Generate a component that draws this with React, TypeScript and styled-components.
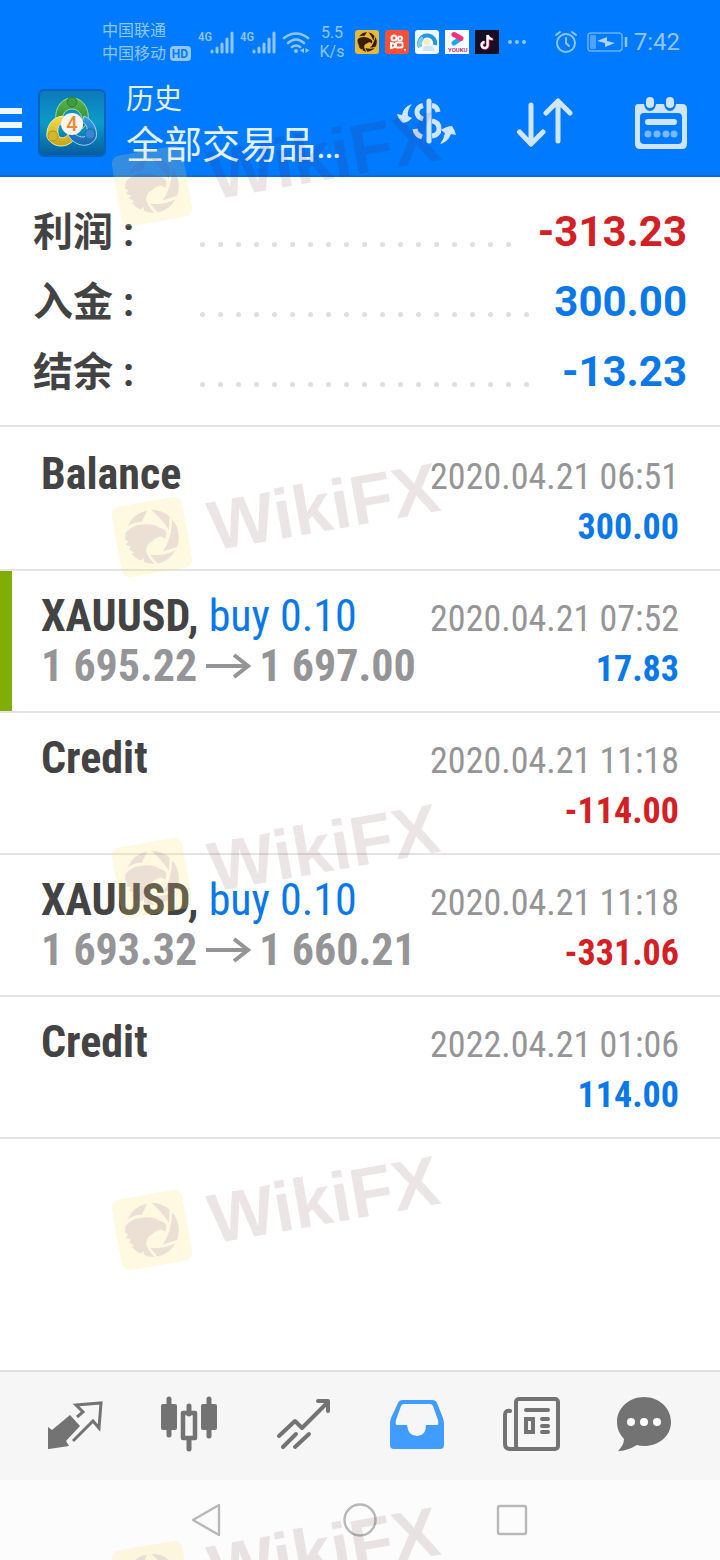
import React from 'react';
import styled, { createGlobalStyle, css } from 'styled-components';

const Global = createGlobalStyle`
  *, *::before, *::after { box-sizing: border-box; }
  body { margin: 0; background: #fff; }
  button { appearance: none; border: 0; padding: 0; background: none; color: inherit; font: inherit; cursor: pointer; }
`;

const BLUE = '#0a78e8';
const RED = '#d32024';

const Page = styled.div`
  position: relative;
  overflow: hidden;
  display: flex;
  flex-direction: column;
  min-height: 100vh;
  background: #fff;
  color: #434343;
  font-family: Roboto, 'Noto Sans CJK SC', sans-serif;
  svg { display: block; flex: none; }
`;

const StatusBar = styled.div`
  display: flex;
  align-items: center;
  height: 84px;
  padding: 0 40px 0 102px;
  background: #007aff;
  color: #8fc6ff;
`;
const Carrier = styled.div`
  display: grid;
  font-size: 16px;
  line-height: 23px;
  width: 96px;
  white-space: nowrap;
`;
const CarrierLine = styled.span`
  display: flex;
  align-items: center;
  gap: 4px;
`;
const Speed = styled.div`
  width: 34px;
  margin: 0 6px 0 3px;
  font-size: 16px;
  line-height: 19px;
  text-align: center;
`;
const AppBadges = styled.div`
  display: flex;
  gap: 6px;
  flex: 1;
  align-items: center;
`;
const PowerGroup = styled.div`
  display: flex;
  align-items: center;
  gap: 9px;
`;
const Clock = styled.time`
  margin-left: 6px;
  font-size: 24px;
  line-height: 28px;
`;

const Header = styled.header`
  display: flex;
  align-items: center;
  height: 93px;
  padding-right: 31px;
  padding-bottom: 14px;
  border-bottom: 2px solid #0e6dd0;
  background: #007aff;
  color: #e3f1ff;
`;
const MenuButton = styled.button`
  display: grid;
  gap: 8px;
  width: 22px;
  margin: 4px 16px 0 0;
`;
const MenuBar = styled.span`
  height: 6px;
  background: #eef6ff;
`;
const Titles = styled.div`
  flex: 1;
  min-width: 0;
  margin-left: 20px;
  padding-top: 5px;
`;
const Title = styled.h1`
  margin: 0;
  font-size: 28px;
  line-height: 40px;
  font-weight: 400;
`;
const Subtitle = styled.div`
  font-size: 38px;
  line-height: 50px;
  font-weight: 400;
`;
const Actions = styled.div`
  display: flex;
  gap: 60px;
`;

const Summary = styled.dl`
  margin: 0;
  padding: 20px 33px 18px;
  border-bottom: 2px solid #e4e4e4;
`;
const SummaryRow = styled.div`
  display: flex;
  align-items: center;
  height: 70px;
`;
const SummaryLabel = styled.dt`
  width: 160px;
  padding-top: 2px;
  font-size: 40px;
  line-height: 48px;
  font-weight: 700;
`;
const Leader = styled.span`
  display: flex;
  flex-wrap: wrap;
  flex: 1;
  height: 5px;
  margin: 24px 16px 0 0;
  overflow: hidden;
`;
const Dot = styled.i`
  width: 5px;
  height: 5px;
  margin: 0 6px 0 7px;
  border-radius: 50%;
  background: #dedede;
`;
const SummaryValue = styled.dd<{ $negative?: boolean }>`
  margin: 0;
  font-size: 42px;
  line-height: 48px;
  font-weight: 700;
  color: ${p => (p.$negative ? RED : BLUE)};
`;

const Deals = styled.ul`
  flex: 1;
  margin: 0;
  padding: 2px 0 0;
  list-style: none;
  font-family: 'Roboto Condensed', 'Liberation Sans Narrow', Roboto, sans-serif;
`;
const Deal = styled.li<{ $marked?: boolean }>`
  display: flex;
  justify-content: space-between;
  height: 142px;
  padding: 20px 41px 0;
  border-bottom: 2px solid #e4e4e4;
  ${p => p.$marked && css`box-shadow: inset 12px 0 #80ad08;`}
`;
const DealMain = styled.div`
  font-size: 44px;
  line-height: 50px;
  font-weight: 700;
  white-space: nowrap;
`;
const Side = styled.span`
  font-weight: 400;
  color: ${BLUE};
`;
const Prices = styled.div`
  display: flex;
  align-items: center;
  gap: 8px;
  color: #959597;
`;
const DealMeta = styled.div`
  padding-top: 3px;
  font-size: 36px;
  line-height: 50px;
  text-align: right;
  white-space: nowrap;
`;
const DealTime = styled.time`
  display: block;
  color: #959597;
`;
const Amount = styled.div<{ $negative?: boolean }>`
  font-weight: 700;
  color: ${p => (p.$negative ? RED : BLUE)};
`;

const TabBar = styled.nav`
  display: flex;
  height: 110px;
  padding: 0 18px 4px;
  border-top: 2px solid #e0e0e0;
  background: #f6f6f6;
`;
const Tab = styled.button<{ $active?: boolean }>`
  display: grid;
  place-items: center;
  flex: 1;
  color: ${p => (p.$active ? '#409cff' : '#737373')};
`;
const SystemNav = styled.nav`
  display: flex;
  justify-content: center;
  align-items: center;
  gap: 116px;
  height: 80px;
  background: #fcfcfc;
`;

const Watermarks = styled.div`
  position: absolute;
  inset: 0;
  overflow: hidden;
  pointer-events: none;
`;
const Watermark = styled.div<{ $top: number }>`
  position: absolute;
  left: 114px;
  top: ${p => p.$top}px;
  display: flex;
  align-items: center;
  gap: 22px;
  transform: rotate(-10deg);
  font: 700 70px/80px 'Liberation Sans', sans-serif;
  color: rgba(80, 20, 20, 0.11);
`;

const Signal = () => (
  <svg width="42" height="26" viewBox="0 0 42 26">
    <text x="0" y="12" fontFamily="Roboto Condensed" fontSize="13" fontWeight="500" fill="#8fc6ff">4G</text>
    <g stroke="#8fc6ff" strokeWidth="3" strokeLinecap="round">
      <path d="M14 22v1M19 19v4M24 15v8M29 10v13M34 4v19" />
    </g>
  </svg>
);

const Wifi = () => (
  <svg width="30" height="26" viewBox="0 0 30 26" fill="none" stroke="#8fc6ff" strokeWidth="2.6" strokeLinecap="round">
    <path d="M2 9q12-9 24 0M6 14q8-7 16 0M10 18q4-3 8 0" />
    <circle cx="14" cy="22" r="2" fill="#8fc6ff" stroke="none" />
    <path d="M22 19v5l-4-2.500zM23.500 19v5l4-2.500z" fill="#8fc6ff" stroke="none" />
  </svg>
);

const EAGLE = 'M-27-2L-25-9Q-18-15-7-14Q4-13 9-8Q15-6 15-1L13 4L9 1Q3 1 0 4Q-8 6-8 14Q-7 20-2 27Q-8 26-12 23L-12 19L-15 21Q-20 18-23 13L-20 12L-25 8L-22 6L-27 3L-24 0Z';
const BLADES = 'M-22-15A27 27 0 0 1 0-27L-7-17Q-15-18-22-15ZM4-27A27 27 0 0 1 21-17L18-4Q13-16 4-27ZM23-14A27 27 0 0 1 23 14L8 16Q19 6 23-14ZM21 17A27 27 0 0 1 1 27L-5 17Q8 21 21 17Z';

const Badges = () => (
  <AppBadges>
    <svg width="24" height="24" viewBox="0 0 24 24">
      <rect width="24" height="24" rx="3" fill="#e6b938" />
      <g transform="translate(12 12) scale(.36)" fill="#3b1d0d"><path d={EAGLE} /><path d={BLADES} /></g>
    </svg>
    <svg width="24" height="24" viewBox="0 0 24 24">
      <rect width="24" height="24" rx="3" fill="#fb5036" />
      <g fill="none" stroke="#fff" strokeWidth="2">
        <circle cx="9" cy="8" r="2.500" /><circle cx="15" cy="8.500" r="2" />
        <rect x="11" y="12.500" width="6.500" height="5" rx="1" /><path d="M6 13l4 1v3l-4 1z" />
      </g>
      <path d="M19 19h2l-1 3z" fill="#fff" />
    </svg>
    <svg width="24" height="24" viewBox="0 0 24 24">
      <rect width="24" height="24" rx="3" fill="#f3faff" />
      <path d="M5 17A8 8 0 1 1 20 15" fill="none" stroke="#2497e2" strokeWidth="4" />
      <path d="M5 17a8 8 0 0 1 3-9" fill="none" stroke="#7ccbe9" strokeWidth="4" />
      <circle cx="12" cy="12" r="3" fill="#ffe9b5" />
      <path d="M8 21q0-6 5-5q5-1 7 5z" fill="#c8e6f6" />
    </svg>
    <svg width="24" height="24" viewBox="0 0 24 24">
      <rect width="24" height="24" fill="#fff" />
      <g fill="none" strokeWidth="5" strokeLinecap="round">
        <path d="M9 13l6-4" stroke="#1aa9ef" /><path d="M9 4.500l7 4" stroke="#f5317f" />
      </g>
      <text x="3" y="22" fontFamily="Roboto" fontSize="6" fontWeight="700" fill="#b0357d">YOUKU</text>
    </svg>
    <svg width="24" height="24" viewBox="0 0 24 24">
      <rect width="24" height="24" fill="#180f24" />
      <g fill="none" strokeWidth="2.400">
        <path d="M12.500 5v10a3 3 0 1 1-3-3M12.500 5q1 4 5 4" stroke="#ef3d65" transform="translate(.8 .6)" />
        <path d="M12.500 5v10a3 3 0 1 1-3-3M12.500 5q1 4 5 4" stroke="#fff" />
      </g>
    </svg>
    <svg width="24" height="6" viewBox="0 0 24 6" fill="#8fc6ff">
      <circle cx="5" cy="3" r="2" /><circle cx="12" cy="3" r="2" /><circle cx="19" cy="3" r="2" />
    </svg>
  </AppBadges>
);

const Alarm = () => (
  <svg width="24" height="26" viewBox="0 0 24 26" fill="none" stroke="#8fc6ff" strokeWidth="2" strokeLinecap="round">
    <circle cx="12" cy="14" r="9" /><path d="M12 9v5l3 3M2 6l4-3M22 6l-4-3" />
  </svg>
);
const Battery = () => (
  <svg width="41" height="20" viewBox="0 0 41 20">
    <rect x="1" y="1" width="34" height="18" rx="3" fill="none" stroke="#69b1ff" strokeWidth="1.500" />
    <rect x="3" y="3" width="6" height="14" rx="1" fill="#4da3ff" />
    <path d="M39 5v10" stroke="#8fc6ff" strokeWidth="2.500" />
    <path d="M10 9l10-4v4l8 2l-10 4v-4z" fill="#a9d4ff" />
  </svg>
);

const Logo = () => (
  <svg width="68" height="68" viewBox="0 0 68 68">
    <defs>
      <linearGradient id="tile" x1="0" y1="0" x2="0" y2="1"><stop stopColor="#0b79b9" /><stop offset=".5" stopColor="#0d9bc9" /><stop offset="1" stopColor="#055c9e" /></linearGradient>
      <linearGradient id="green" x1="0" y1="0" x2="0" y2="1"><stop stopColor="#5fb84b" /><stop offset="1" stopColor="#1f7d2e" /></linearGradient>
      <linearGradient id="gold" x1="0" y1="0" x2="0" y2="1"><stop stopColor="#f3dc49" /><stop offset="1" stopColor="#c3a51c" /></linearGradient>
      <linearGradient id="sky" x1="0" y1="0" x2="0" y2="1"><stop stopColor="#3aa0e4" /><stop offset="1" stopColor="#1763ae" /></linearGradient>
    </defs>
    <rect x="1" y="1" width="66" height="66" rx="5" fill="url(#tile)" stroke="#0561bd" strokeWidth="2" />
    <g strokeWidth="1">
      <path d="M18 33C16 17 25 9 34 9S52 17 50 33L44 40C46 28 42 20 34 20S23 28 24 36Z" fill="url(#green)" stroke="#a8dc9c" />
      <path d="M25 27C13 28 8 39 9 48C14 59 30 61 38 48L31 44C27 51 20 50 20 44C19 37 22 34 27 33Z" fill="url(#gold)" stroke="#f6efa4" />
      <path d="M46 27C56 31 60 42 58 49C52 60 37 58 30 46L35 43C41 49 48 50 49 44C50 38 48 35 44 33Z" fill="url(#sky)" stroke="#a3d4f2" />
    </g>
    <circle cx="34" cy="13" r="5" fill="#3d9c43" stroke="#2a7f35" />
    <circle cx="15" cy="47" r="5" fill="#d5b628" stroke="#b39618" />
    <circle cx="52" cy="45" r="5" fill="#3689cf" stroke="#1c69b0" />
    <circle cx="34" cy="35" r="11" fill="#f8f4ef" />
    <text x="34" y="42" textAnchor="middle" fontFamily="Roboto" fontSize="20" fontWeight="500" fill="#ea8a35">4</text>
  </svg>
);

const CurrencyIcon = () => (
  <svg width="60" height="52" viewBox="0 0 60 52" fill="none" stroke="#cfe5fb">
    <path d="M32 4v40" strokeWidth="5" strokeLinecap="round" />
    <path d="M26 8.500Q20 10 20 15Q20 20 26 22M25 40Q19 38 18 32" strokeWidth="5" />
    <path d="M35 8.500Q40 9 41 15M35 24Q42 25 42 32Q42 38 35 39" strokeWidth="5" />
    <path d="M15 7Q6 10 5 18L0 17Q2 23 6 26Q12 25 15 21L11 19Q10 13 15 7Z" fill="#cfe5fb" stroke="none" />
    <path d="M43 47Q47 42 48 36L44 33Q50 29 55 29Q58 33 59 38L54 37Q51 45 43 47Z" fill="#cfe5fb" stroke="none" />
  </svg>
);
const SortIcon = () => (
  <svg width="56" height="52" viewBox="0 0 56 52" fill="none" stroke="#cfe5fb" strokeWidth="5" strokeLinecap="round" strokeLinejoin="round">
    <path d="M14 8v39M2.500 35l11.500 12l12-12M41 44V4M29 16L41 4l12 12" />
  </svg>
);
const CalendarIcon = () => (
  <svg width="56" height="54" viewBox="0 0 56 54">
    <path fill="#cfe5fb" fillRule="evenodd" d="M5 8H11Q12 15 17 15T23 8H31Q32 15 37 15T43 8H49Q54 8 54 13V48Q54 53 49 53H7Q2 53 2 48V12Q2 8 5 8ZM11 17Q7 17 7 21V44Q7 48 11 48H45Q49 48 49 44V21Q49 17 45 17Z" />
    <rect x="13" y="1" width="8" height="11" rx="4" fill="#cfe5fb" /><rect x="33" y="1" width="8" height="11" rx="4" fill="#cfe5fb" />
    <rect x="12" y="23" width="32" height="6" rx="3" fill="#cfe5fb" />
    <g fill="#79b8fb"><circle cx="15" cy="38" r="3.500" /><circle cx="24" cy="38" r="3.500" /><circle cx="33" cy="38" r="3.500" /><circle cx="41" cy="38" r="3.500" /></g>
  </svg>
);

const Arrow = () => (
  <svg width="46" height="26" viewBox="0 0 46 26" fill="none" stroke="#959597" strokeWidth="4">
    <path d="M1 13H43M29 2L43 13L29 24" />
  </svg>
);

const tabIcons = {
  Quotes: (
    <svg width="56" height="56" viewBox="0 0 56 56">
      <path d="M1 31L5 34L23 19L33 30L19 45L22 50L2 53L1 53Z" fill="currentColor" />
      <path d="M30 21L36 16L29 9L54 7L52 32L46 25L26 45" fill="none" stroke="currentColor" strokeWidth="3" />
    </svg>
  ),
  Charts: (
    <svg width="58" height="56" viewBox="0 0 58 56" fill="currentColor">
      <rect x="1" y="8" width="16" height="26" rx="2" /><rect x="41" y="8" width="16" height="26" rx="2" />
      <path d="M9 3V39M49 3V40M29 10V18M29 44V53" stroke="currentColor" strokeWidth="5" strokeLinecap="round" />
      <rect x="23" y="17" width="12" height="25" fill="none" stroke="currentColor" strokeWidth="4.500" strokeLinejoin="round" />
    </svg>
  ),
  Trade: (
    <svg width="56" height="56" viewBox="0 0 56 56" fill="none" stroke="currentColor" strokeWidth="4" strokeLinecap="round" strokeLinejoin="round">
      <path d="M4 40L20 25L27 32L53 6M43 5H53V15M8 51L21 38M20 51L34 38" />
    </svg>
  ),
  History: (
    <svg width="56" height="56" viewBox="0 0 56 56">
      <path fill="currentColor" fillRule="evenodd" d="M14 4H43Q47 4 48 7L54 22Q55 25 55 28V49Q55 53 51 53H5Q1 53 1 49V28Q1 25 2 22L9 7Q10 4 14 4ZM15 8Q13 8 12 10L7 24Q6 29 8 29H18Q19 40 28 40T37 29H48Q50 29 49 24L44 10Q43 8 41 8Z" />
    </svg>
  ),
  News: (
    <svg width="58" height="56" viewBox="0 0 58 56" fill="none" stroke="currentColor" strokeWidth="4" strokeLinecap="round">
      <rect x="14" y="3" width="42" height="50" rx="3" /><path d="M8 15Q3 14 3 19V48Q3 53 8 53H16M24 14H46M40 23H46M40 30H46M40 36H46" />
      <rect x="24" y="23" width="7" height="13" />
    </svg>
  ),
  Messages: (
    <svg width="56" height="56" viewBox="0 0 56 56">
      <path d="M27 1C42 1 54 12 54 26S42 50 27 50Q23 50 20 49Q10 55 1 55Q7 49 7 43Q0 36 0 26C0 12 12 1 27 1Z" fill="currentColor" />
      <g fill="#fff"><circle cx="14" cy="26" r="4" /><circle cx="27" cy="26" r="4" /><circle cx="40" cy="26" r="4" /></g>
    </svg>
  ),
};

const summary = [
  { label: '利润', value: '-313.23', negative: true },
  { label: '入金', value: '300.00' },
  { label: '结余', value: '-13.23' },
];

const deals = [
  { name: 'Balance', time: '2020.04.21 06:51', amount: '300.00' },
  { name: 'XAUUSD,', side: 'buy 0.10', from: '1 695.22', to: '1 697.00', time: '2020.04.21 07:52', amount: '17.83', marked: true },
  { name: 'Credit', time: '2020.04.21 11:18', amount: '-114.00' },
  { name: 'XAUUSD,', side: 'buy 0.10', from: '1 693.32', to: '1 660.21', time: '2020.04.21 11:18', amount: '-331.06' },
  { name: 'Credit', time: '2022.04.21 01:06', amount: '114.00' },
];

export default function App() {
  return (
    <Page>
      <Global />
      <StatusBar>
        <Carrier>
          <span>中国联通</span>
          <CarrierLine>
            中国移动
            <svg width="21" height="15" viewBox="0 0 21 15">
              <rect width="21" height="15" rx="4" fill="#8fc6ff" />
              <text x="10" y="12" textAnchor="middle" fontFamily="Roboto" fontSize="12" fontWeight="700" fill="#007aff">HD</text>
            </svg>
          </CarrierLine>
        </Carrier>
        <Signal />
        <Signal />
        <Wifi />
        <Speed>5.5 K/s</Speed>
        <Badges />
        <PowerGroup>
          <Alarm />
          <Battery />
        </PowerGroup>
        <Clock>7:42</Clock>
      </StatusBar>

      <Header>
        <MenuButton aria-label="Menu"><MenuBar /><MenuBar /><MenuBar /></MenuButton>
        <Logo />
        <Titles>
          <Title>历史</Title>
          <Subtitle>全部交易品…</Subtitle>
        </Titles>
        <Actions>
          <button aria-label="Currency"><CurrencyIcon /></button>
          <button aria-label="Sort"><SortIcon /></button>
          <button aria-label="Calendar"><CalendarIcon /></button>
        </Actions>
      </Header>

      <Summary>
        {summary.map(s => (
          <SummaryRow key={s.label}>
            <SummaryLabel>{s.label} :</SummaryLabel>
            <Leader aria-hidden>{Array.from({ length: 60 }, (_, i) => <Dot key={i} />)}</Leader>
            <SummaryValue $negative={s.negative}>{s.value}</SummaryValue>
          </SummaryRow>
        ))}
      </Summary>

      <Deals>
        {deals.map((d, i) => (
          <Deal key={i} $marked={d.marked}>
            <DealMain>
              <div>{d.name}{d.side && <Side> {d.side}</Side>}</div>
              {d.from && <Prices><span>{d.from}</span><Arrow /><span>{d.to}</span></Prices>}
            </DealMain>
            <DealMeta>
              <DealTime>{d.time}</DealTime>
              <Amount $negative={d.amount.startsWith('-')}>{d.amount}</Amount>
            </DealMeta>
          </Deal>
        ))}
      </Deals>

      <TabBar>
        {Object.entries(tabIcons).map(([name, icon]) => (
          <Tab key={name} aria-label={name} $active={name === 'History'}>{icon}</Tab>
        ))}
      </TabBar>
      <SystemNav>
        <button aria-label="Back">
          <svg width="36" height="36" viewBox="0 0 36 36" fill="none" stroke="#b8b8b8" strokeWidth="2.400" strokeLinejoin="round"><path d="M29 3V33L3 18Z" /></svg>
        </button>
        <button aria-label="Home">
          <svg width="36" height="36" viewBox="0 0 36 36" fill="none" stroke="#b8b8b8" strokeWidth="2.400"><circle cx="18" cy="18" r="15.500" /></svg>
        </button>
        <button aria-label="Recent apps">
          <svg width="36" height="36" viewBox="0 0 36 36" fill="none" stroke="#b8b8b8" strokeWidth="2.400"><rect x="4" y="4" width="28" height="28" rx="1.500" /></svg>
        </button>
      </SystemNav>

      <Watermarks aria-hidden>
        {[124, 475, 816, 1168, 1519].map(top => (
          <Watermark key={top} $top={top}>
            <svg width="72" height="72" viewBox="0 0 72 72">
              <rect width="72" height="72" rx="9" fill="#ffdf70" fillOpacity=".2" />
              <g transform="translate(36 36)" fill="#6a3a80" fillOpacity=".13"><path d={EAGLE} /><path d={BLADES} /></g>
            </svg>
            WikiFX
          </Watermark>
        ))}
      </Watermarks>
    </Page>
  );
}
